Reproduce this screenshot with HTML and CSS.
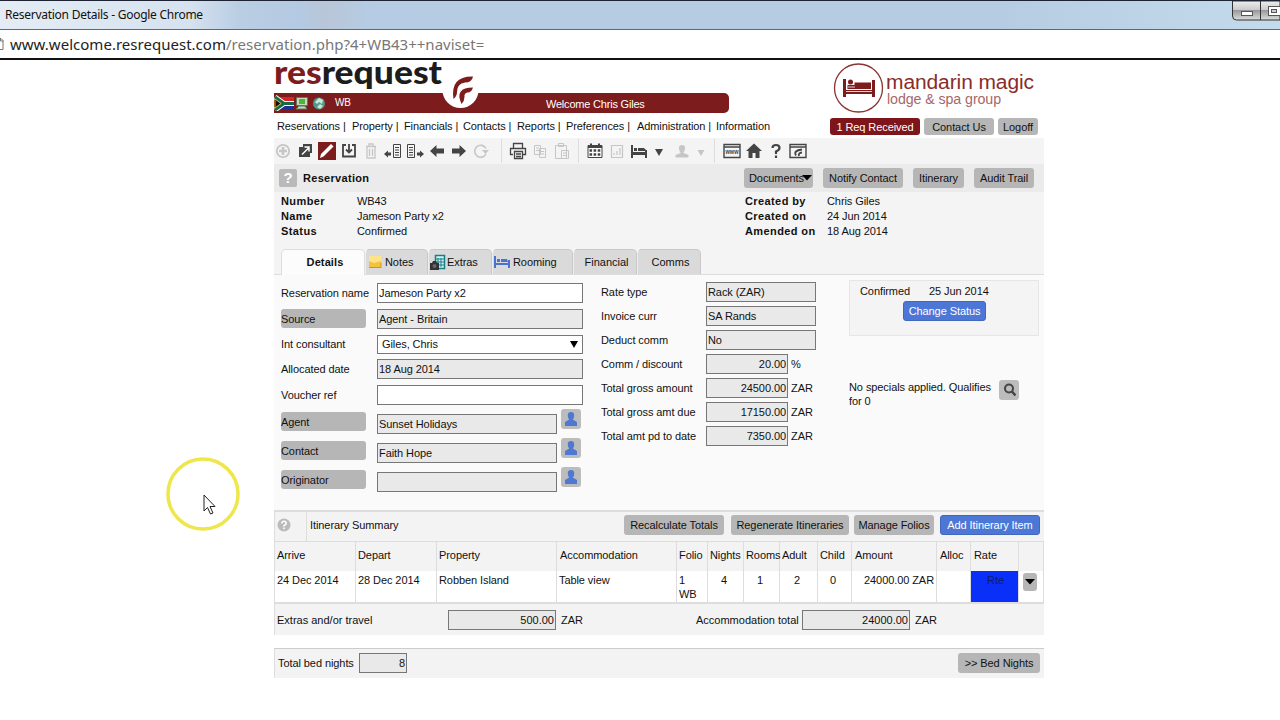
FILE: index.html
```
<!DOCTYPE html>
<html lang="en">
<head>
    <meta charset="UTF-8">
    <title>Reservation Details</title>
    <link rel="stylesheet" href="styles.css">
</head>
<body>
    <div class="titlebar">
        <span>Reservation Details - Google Chrome</span>
        <svg class="window-buttons" width="48" height="20" viewBox="0 0 48 20">
            <defs><linearGradient id="glass" x2="0" y2="1"><stop offset="0" stop-color="#eee"/><stop offset=".45" stop-color="#ccc"/><stop offset=".5" stop-color="#999"/><stop offset="1" stop-color="#ddd"/></linearGradient></defs>
            <path d="M.5 0V15q0 4 4 4H48V0z" fill="url(#glass)" stroke="#333"/>
            <path d="M28.500 0V19" stroke="#333"/>
            <rect x="9.500" y="10.500" width="11" height="4" fill="#fff" stroke="#555"/>
            <rect x="36.500" y="5.500" width="13" height="9" fill="#fff" stroke="#555"/><rect x="39.500" y="8.500" width="5" height="3" fill="#ccc" stroke="#555"/>
        </svg>
    </div>
    <div class="addressbar">
        <svg width="5" height="14" viewBox="0 0 5 14"><path d="M0 1.500h1l2 2v9H0M.5 1v3h3" fill="none" stroke="#777"/></svg>
        <span>www.welcome.resrequest.com<em>/reservation.php?4+WB43++naviset=</em></span>
    </div>

    <div class="page">
        <div class="header">
            <div class="brand">
                <svg class="logo" width="180" height="33" viewBox="0 0 180 33">
                    <text x="0" y="24" textLength="168" lengthAdjust="spacingAndGlyphs"><tspan fill="#7d1c1c">res</tspan><tspan fill="#1c1c1c">request</tspan></text>
                </svg>
                <div class="welcome-bar">
                    <svg width="52" height="16" viewBox="0 0 52 16">
                        <path fill="#d8232a" d="M1 2h19v6H1z"/><path fill="#1c2f9c" d="M1 9h19v6H1z"/>
                        <path d="M1 2l9 6.500h10M1 15l9-6.500" stroke="#fff" stroke-width="5" fill="none"/>
                        <path d="M1 2l9 6.500h10M1 15l9-6.500" stroke="#176b42" stroke-width="3" fill="none"/>
                        <path d="M1 4l6 4.500-6 4.500z" fill="#111" stroke="#e0a82e"/>
                        <path d="M22.500 2.500h11v8h-11zM25 11h6l2 3H22z" fill="#c9d6c0" stroke="#5f775f"/><path fill="#40ba38" d="M25 4h6v5h-6z"/>
                        <circle cx="45" cy="8.500" r="6" fill="#54988a"/><path d="M41 7l4-4 4 2-1 4-3-2-2 2zM43 12l3-3 3 2-3 3z" fill="#c5e8d7"/>
                    </svg>
                    <span class="property-code">WB</span>
                    <span class="welcome">Welcome Chris Giles</span>
                </div>
                <svg class="swirl" width="38" height="38" viewBox="0 0 38 38">
                    <circle cx="18.500" cy="16" r="18" fill="#fff"/>
                    <path d="M11.500 25Q8 2 31 2.500Q30 8.500 23 8.500Q15 9.500 15 18Q15 22 11.500 25z" fill="#7d1c1c"/>
                    <path d="M19.500 30Q12 13.500 31 13.500Q29.500 18.500 25.500 18.500Q22 19 22.500 23Q22.500 27 19.500 30z" fill="#7d1c1c"/>
                </svg>
            </div>
            <div class="client">
                <svg class="client-logo" width="210" height="52" viewBox="0 0 210 52">
                    <circle cx="28.500" cy="26" r="24" fill="#fff" stroke="#8a3330" stroke-width="1.300"/>
                    <path d="M13 17h3v11h26V18h3v17h-3v-3H16v3h-3z" fill="#7d1c1c"/>
                    <path d="M17.500 27v-4h7v-2.500h16.500V27z" fill="#7d1c1c"/><circle cx="20.500" cy="20" r="2.500" fill="#7d1c1c"/><path d="M18 25h7M16 29.500h26" stroke="#fff" stroke-width=".8"/>
                    <text class="client-name" x="56" y="27" textLength="148" lengthAdjust="spacingAndGlyphs">mandarin magic</text>
                    <text class="client-sub" x="57" y="42" textLength="114" lengthAdjust="spacingAndGlyphs">lodge &amp; spa group</text>
                </svg>
                <div class="client-buttons">
                    <a class="btn red">1 Req Received</a><a class="btn contact">Contact Us</a><a class="btn logoff">Logoff</a>
                </div>
            </div>
        </div>
        <div class="menu">
            <span>Reservations |</span><span>Property |</span><span>Financials |</span><span>Contacts |</span><span>Reports |</span><span>Preferences |</span><span>Administration |</span><span>Information</span>
        </div>

        <div class="toolbar">
            <svg class="off" viewBox="0 0 18 18"><circle cx="9" cy="9" r="6.200" fill="none" stroke="currentColor" stroke-width="1.800"/><path d="M9 5v8M5 9h8" stroke="currentColor" stroke-width="2.600"/></svg>
            <svg viewBox="0 0 18 18"><path d="M7 2h9v9h-2v4H3V5h4z" fill="currentColor"/><path d="M6 12.500l6.500-6.500M8.500 5h4.500v4.500" stroke="#fff" stroke-width="1.500" fill="none"/></svg>
            <svg class="active" viewBox="0 0 18 18"><path fill="#7d1c1c" d="M0 0h18v18H0z"/><path d="M2 16l1-4L13 2l2.500 2.500L5.500 14.500z" fill="#fff"/></svg>
            <svg viewBox="0 0 18 18"><path d="M6 3H3v11.500h12V3h-3" fill="none" stroke="currentColor" stroke-width="1.800"/><path d="M9 2v8M6 7.500l3 3 3-3" fill="none" stroke="currentColor" stroke-width="1.800"/></svg>
            <svg class="off" viewBox="0 0 18 18"><path d="M4 4.500h10M7 4V2h4v2M5 5v11h8V5M7.500 7v7M10.500 7v7" fill="none" stroke="currentColor" stroke-width="1.300"/></svg>
            <svg viewBox="0 0 18 18"><path d="M9.500 2.500h7v13h-7zM11 5.500h4M11 8h4M11 10.500h4M11 13h4" fill="none" stroke="currentColor"/><path d="M0 12l4-3.500v2h3v3H4v2z" fill="currentColor"/></svg>
            <svg viewBox="0 0 18 18"><path d="M1.500 2.500h7v13h-7zM3 5.500h4M3 8h4M3 10.500h4M3 13h4" fill="none" stroke="currentColor"/><path d="M18 12l-4-3.500v2h-3v3h3v2z" fill="currentColor"/></svg>
            <svg viewBox="0 0 18 18"><path d="M2 9l6.500-6V6.500H16v5H8.500V15z" fill="currentColor"/></svg>
            <svg viewBox="0 0 18 18"><path d="M16 9L9.500 3V6.500H2v5h7.500V15z" fill="currentColor"/></svg>
            <svg class="off" viewBox="0 0 18 18"><path d="M14 6.500A6 6 0 1 0 14 12" fill="none" stroke="currentColor" stroke-width="1.600"/><path d="M10 8h7l-3.500 4z" fill="currentColor"/></svg>
            <i class="sep first"></i>
            <svg viewBox="0 0 18 18"><path d="M4.500 6V1.500h9V6M4 12.500H1.500v-6h15v6H14M5.500 9.500h8v7h-8zM7 12h5M7 14.500h5" fill="none" stroke="currentColor" stroke-width="1.300"/></svg>
            <svg class="off" viewBox="0 0 18 18"><path d="M3.500 3.500h6v9h-6zM8.500 6.500h6v9h-6zM5 6h3M5 8.500h3M10 9.500h3M10 12h3" fill="#f4f4f4" stroke="currentColor"/></svg>
            <svg class="off" viewBox="0 0 18 18"><path d="M2.500 3.500h11v13h-11zM5.500 1.500h5v3h-5zM8.500 8.500h7v8h-7zM10 11h4M10 13.500h4" fill="#f4f4f4" stroke="currentColor"/></svg>
            <i class="sep"></i>
            <svg viewBox="0 0 18 18"><path d="M2 3.500h14v12H2z" fill="#fff" stroke="currentColor"/><path d="M2 5h14M5 1.500V5M13 1.500V5" stroke="currentColor" stroke-width="2"/><path d="M3.500 8.500h11M3.500 12.500h11" stroke="currentColor" stroke-width="2.500" stroke-dasharray="2.600 1.500"/></svg>
            <svg class="off" viewBox="0 0 18 18"><path d="M3.500 3.500h11v12h-11zM6 13v-2M9 13V9M12 13V6" fill="none" stroke="currentColor" stroke-width="1.200"/></svg>
            <svg viewBox="0 0 18 18"><path d="M1 3h2v7h12V8h2v8h-2v-3H3v3H1z" fill="currentColor"/><path d="M4 9V6h3v3zM8 9V6h6l2 2v1z" fill="currentColor"/></svg>
            <svg class="caret" viewBox="0 0 10 18"><path d="M1 7h8l-4 7z" fill="currentColor"/></svg>
            <svg class="off person" viewBox="0 0 18 18"><path d="M9 3q3.500 0 3 3.500Q12 9 10.500 10v1l5 2v2.500h-13V13l5-2v-1Q6 9 6 6.500 5.500 3 9 3z" fill="currentColor"/></svg>
            <svg class="caret off small" viewBox="0 0 10 18"><path d="M1.500 8h7L5 14z" fill="currentColor"/></svg>
            <i class="sep last"></i>
            <svg viewBox="0 0 18 18"><path d="M1 2.500h16v13H1zM1 5h16" fill="none" stroke="currentColor" stroke-width="1.400"/><text class="www" x="2.500" y="12" textLength="13" lengthAdjust="spacingAndGlyphs">www</text></svg>
            <svg viewBox="0 0 18 18"><path d="M9 1.500l8 7.500h-2.500v7h-4v-5h-3v5h-4V9H1z" fill="currentColor"/></svg>
            <svg viewBox="0 0 18 18"><path d="M5.500 6Q5.500 3 9 3t3.500 3Q12.500 8 9 9.500V12M9 13.500V16" fill="none" stroke="currentColor" stroke-width="2.200"/></svg>
            <svg viewBox="0 0 18 18"><path d="M1 2.500h16v13H1zM1 5h16" fill="none" stroke="currentColor" stroke-width="1.400"/><path d="M7 13.500q-3-5 6-6M10 14q-1-3 3-3.500" fill="none" stroke="currentColor" stroke-width="1.800"/></svg>
        </div>

        <div class="heading">
            <span class="help">?</span>
            <h1>Reservation</h1>
            <a class="btn documents">Documents<svg width="10" height="6" viewBox="0 0 10 6"><path d="M0 0h10L5 5.500z"/></svg></a><a class="btn notify">Notify Contact</a><a class="btn itin">Itinerary</a><a class="btn audit">Audit Trail</a>
        </div>

        <div class="info">
            <b>Number</b><span>WB43</span><b>Created by</b><span>Chris Giles</span>
            <b>Name</b><span>Jameson Party x2</span><b>Created on</b><span>24 Jun 2014</span>
            <b>Status</b><span>Confirmed</span><b>Amended on</b><span>18 Aug 2014</span>
        </div>

        <div class="tabs">
            <div class="tab current">Details</div>
            <div class="tab notes"><svg width="14" height="14" viewBox="0 0 14 14"><path d="M1 1h12v12H1z" fill="#f5c33b"/><path d="M1 1h12v5L6 8 1 6z" fill="#ffe28a"/><path d="M1 12.500h12V8" stroke="#d39413" fill="none"/></svg>Notes</div>
            <div class="tab extras"><svg width="16" height="16" viewBox="0 0 16 16"><path d="M5.500 1.500h9v13h-9z" fill="#d9f0f0" stroke="#148088" stroke-width="1.500"/><path d="M8 4v9M11 4v9M6 5h8M6 8h8M6 11h8" stroke="#148088"/><path d="M0 9h2l1-2h3l1 2h2v7H0z" fill="#333"/><circle cx="4.500" cy="12" r="2" fill="#666"/></svg>Extras</div>
            <div class="tab rooming"><svg width="16" height="14" viewBox="0 0 16 14"><path d="M0 1h2v7h12V5h2v8h-2v-3H2v3H0z" fill="#4a72d0"/><path d="M3 7V4h3v3zM7 7V4h6l1 3z" fill="#4a72d0"/></svg>Rooming</div>
            <div class="tab financial">Financial</div>
            <div class="tab comms">Comms</div>
        </div>

        <div class="details">
            <div class="left">
                <div class="row r26"><label>Reservation name</label><div class="field white">Jameson Party x2</div></div>
                <div class="row r26"><label class="link">Source</label><div class="field">Agent - Britain</div></div>
                <div class="row r24"><label class="short">Int consultant</label><div class="field white select">Giles, Chris<svg width="8" height="7" viewBox="0 0 8 7"><path d="M0 0h8L4 7z"/></svg></div></div>
                <div class="row r26"><label>Allocated date</label><div class="field">18 Aug 2014</div></div>
                <div class="row r24"><label>Voucher ref</label><div class="field white"></div></div>
                <div class="row who"><label class="link">Agent</label><div class="field">Sunset Holidays</div><span class="icon-btn"><svg viewBox="0 0 12 14"><path d="M6 0q3.500 0 3.200 4Q9 6.500 7.800 7.500L12 10v4H0v-4l4.200-2.500Q3 6.500 2.800 4 2.500 0 6 0z"/></svg></span></div>
                <div class="row who"><label class="link">Contact</label><div class="field">Faith Hope</div><span class="icon-btn"><svg viewBox="0 0 12 14"><path d="M6 0q3.500 0 3.200 4Q9 6.500 7.800 7.500L12 10v4H0v-4l4.200-2.500Q3 6.500 2.800 4 2.500 0 6 0z"/></svg></span></div>
                <div class="row who"><label class="link">Originator</label><div class="field"></div><span class="icon-btn"><svg viewBox="0 0 12 14"><path d="M6 0q3.500 0 3.200 4Q9 6.500 7.800 7.500L12 10v4H0v-4l4.200-2.500Q3 6.500 2.800 4 2.500 0 6 0z"/></svg></span></div>
            </div>
            <div class="middle">
                <div class="row"><label>Rate type</label><div class="field">Rack (ZAR)</div></div>
                <div class="row"><label>Invoice curr</label><div class="field">SA Rands</div></div>
                <div class="row"><label>Deduct comm</label><div class="field">No</div></div>
                <div class="row"><label>Comm / discount</label><div class="field num">20.00</div>%</div>
                <div class="row"><label>Total gross amount</label><div class="field num">24500.00</div>ZAR</div>
                <div class="row"><label>Total gross amt due</label><div class="field num">17150.00</div>ZAR</div>
                <div class="row"><label>Total amt pd to date</label><div class="field num">7350.00</div>ZAR</div>
            </div>
            <div class="right">
                <div class="status-box">
                    <div class="status-line"><span>Confirmed</span><span>25 Jun 2014</span></div>
                    <a class="btn blue change">Change Status</a>
                </div>
                <div class="specials">
                    <p>No specials applied. Qualifies for 0</p>
                    <span class="icon-btn"><svg class="lens" viewBox="0 0 14 14"><circle cx="7" cy="5.500" r="4" fill="none" stroke="#444" stroke-width="2"/><path d="M10 8.500l3.500 4" stroke="#444" stroke-width="2.500"/></svg></span>
                </div>
            </div>
        </div>

        <div class="summary-head">
            <span class="round-help"><svg width="14" height="14" viewBox="0 0 14 14"><circle cx="7" cy="7" r="6.500" fill="#bbb"/><path d="M4.800 5.500Q5 3.300 7 3.300T9.200 5.200Q9.200 6.500 7 7.500V8.500M7 9.500v1.700" fill="none" stroke="#fff" stroke-width="1.600"/></svg></span>
            <span class="summary-title">Itinerary Summary</span>
            <a class="btn recalc">Recalculate Totals</a><a class="btn regen">Regenerate Itineraries</a><a class="btn folios">Manage Folios</a><a class="btn blue additem">Add Itinerary Item</a>
        </div>
        <table class="itinerary">
            <colgroup><col class="w81"><col class="w81"><col class="w120"><col class="w120"><col class="w31"><col class="w36"><col class="w36"><col class="w38"><col class="w34"><col class="w85"><col class="w34"><col class="w48"><col class="w26"></colgroup>
            <tr><th>Arrive</th><th>Depart</th><th>Property</th><th>Accommodation</th><th>Folio</th><th>Nights</th><th>Rooms</th><th>Adult</th><th>Child</th><th>Amount</th><th>Alloc</th><th>Rate</th><th></th></tr>
            <tr><td>24 Dec 2014</td><td>28 Dec 2014</td><td>Robben Island</td><td>Table view</td><td>1<br>WB</td><td class="mid">4</td><td class="mid">1</td><td class="mid">2</td><td class="mid">0</td><td class="amount">24000.00 ZAR</td><td></td><td class="rate">Rte</td><td><span class="drop"><svg width="10" height="6" viewBox="0 0 10 6"><path d="M0 0h10L5 5.500z"/></svg></span></td></tr>
        </table>
        <div class="totals">
            <span class="extras-label">Extras and/or travel</span><div class="field num">500.00</div><span class="acc-label">ZAR</span><span class="acc-total">Accommodation total</span><div class="field num">24000.00</div><span>ZAR</span>
        </div>
        <div class="bednights">
            <span>Total bed nights</span><div class="field num">8</div><a class="btn nights">&gt;&gt; Bed Nights</a>
        </div>
    </div>

    <svg class="pointer" width="76" height="76" viewBox="0 0 76 76">
        <circle cx="38" cy="38" r="35" fill="#fff" stroke="#efe64a" stroke-width="3.500"/>
        <path d="M39 39v16l3.500-3.500 3 6.500 2.500-1-3-6.500h5z" fill="#fff" stroke="#222"/>
    </svg>
</body>
</html>
```
FILE: styles.css
```
* {
    box-sizing: border-box;
}
body {
    margin: 0;
    height: 720px;
    overflow: hidden;
    position: relative;
    background: #fff;
    color: #111;
    font-family: "Liberation Sans", Arial, sans-serif;
    font-size: 11px;
    line-height: 14px;
    letter-spacing: -.08px;
}
svg {
    display: block;
    flex: none;
}

/* browser window */
.titlebar {
    height: 30px;
    border-top: 1px solid #1d2333;
    border-bottom: 1px solid #5c6b70;
    background: linear-gradient(90deg, #e4edf5 0, #d5e2ef 190px, #b9cde3 240px, #b4cae2 300px, #b9c6d8 325px, #b5cce4 370px, #b6cce2 1000px, #c4dbec 1280px);
    display: flex;
    justify-content: space-between;
    padding-left: 5px;
    font: 12px/27px "Noto Sans", sans-serif;
    letter-spacing: -.26px;
}
.addressbar {
    height: 30px;
    border-bottom: 2px solid #111;
    display: flex;
    align-items: center;
    gap: 5px;
    font: 15px/28px "Noto Sans", sans-serif;
    letter-spacing: .02px;
    color: #222;
}
.addressbar em {
    font-style: normal;
    color: #777;
}

/* header */
.page {
    width: 770px;
    margin-left: 274px;
}
.header {
    height: 58px;
    display: flex;
}
.brand {
    position: relative;
    width: 455px;
}
.logo {
    overflow: visible;
}
.logo text {
    font: 900 33px Lato, sans-serif;
    letter-spacing: 0;
}
.welcome-bar {
    height: 20px;
    background: #7d1c1c;
    border-radius: 0 5px 5px 0;
    display: flex;
    align-items: center;
    color: #fff;
}
.property-code {
    margin-left: 9px;
    font-size: 10px;
}
.welcome {
    margin-left: 195px;
    padding-top: 2px;
    letter-spacing: -.2px;
}
.swirl {
    position: absolute;
    left: 168px;
    top: 14px;
}
.client {
    margin-left: 101px;
}
.client-logo {
    margin-top: 2px;
}
.client-name {
    font-size: 20px;
    fill: #8a2c2c;
}
.client-sub {
    font-size: 14px;
    fill: #a56767;
}
.client-buttons {
    display: flex;
    gap: 4px;
    margin: 4px 0 0;
}
.btn {
    height: 20px;
    flex: none;
    border-radius: 3px;
    background: #b6b6b6;
    text-align: center;
    line-height: 20px;
    white-space: nowrap;
}
.client-buttons .btn {
    height: 17px;
    line-height: 18px;
}
.client-buttons .red {
    width: 90px;
    background: #7d151b;
    color: #fff;
}
.contact {
    width: 70px;
}
.logoff {
    width: 40px;
}
.menu {
    height: 20px;
    padding: 1px 0 0 3px;
    display: grid;
    grid-template-columns: 75px 52px 59px 54px 49px 71px 79px 60px;
    white-space: nowrap;
    letter-spacing: -.1px;
}

/* toolbar */
.toolbar {
    height: 26px;
    background: #f4f4f4;
    display: flex;
    align-items: center;
    color: #444;
}
.toolbar svg {
    width: 18px;
    height: 18px;
    margin: 0 2px;
}
.toolbar svg:first-child {
    margin-left: 0;
}
.toolbar .off {
    color: #c6c6c6;
}
.toolbar .caret {
    width: 10px;
    margin: 0 4px;
}
.toolbar .person {
    margin-left: 5px;
}
.toolbar .small {
    margin: 0 3px;
}
.www {
    font: bold 7px "Liberation Sans", sans-serif;
    letter-spacing: 0;
    fill: #444;
}
.sep {
    width: 1px;
    height: 24px;
    margin: 0 5px;
    background: #ddd;
}
.sep.first {
    margin-left: 9px;
}
.sep.last {
    margin-right: 6px;
}

/* title row */
.heading {
    height: 28px;
    background: #ebebeb;
    display: flex;
    align-items: center;
}
.help {
    width: 18px;
    height: 18px;
    margin-left: 5px;
    border-radius: 2px;
    background: #b9b9b9;
    color: #fff;
    font: bold 15px/18px "Liberation Sans", sans-serif;
    text-align: center;
}
h1 {
    flex: none;
    width: 441px;
    margin: 0 0 0 6px;
    font-size: 11px;
    letter-spacing: .3px;
}
.documents {
    width: 69px;
    display: flex;
    align-items: center;
    padding-left: 5px;
}
.documents svg {
    margin-left: -2px;
}
.notify {
    width: 80px;
    margin-left: 10px;
}
.itin {
    width: 51px;
    margin-left: 10px;
}
.audit {
    width: 60px;
    margin-left: 10px;
}
.info {
    height: 57px;
    padding: 2px 0 0 7px;
    background: #f4f4f4;
    display: grid;
    grid-template-columns: 76px 388px 82px 1fr;
    grid-auto-rows: 15px;
    line-height: 15px;
}
.info b {
    letter-spacing: .4px;
}

/* tabs */
.tabs {
    height: 26px;
    padding-left: 7px;
    background: #f4f4f4;
    border-bottom: 1px solid #ddd;
    display: flex;
}
.tab {
    height: 25px;
    display: flex;
    align-items: center;
    border: 1px solid #c8c8c8;
    border-left-color: #eee;
    border-bottom: none;
    border-radius: 5px 5px 0 0;
    background: #dadada;
}
.tab.current {
    width: 84px;
    height: 26px;
    justify-content: center;
    padding: 0 0 1px 4px;
    background: #fcfcfc;
    border-color: #ddd;
    font-weight: bold;
    letter-spacing: .1px;
}
.notes {
    width: 63px;
    padding-left: 2px;
    gap: 3px;
}
.extras {
    width: 64px;
    padding-left: 1px;
    gap: 1px;
}
.rooming {
    width: 81px;
    padding-left: 1px;
    gap: 3px;
}
.financial, .comms {
    width: 64px;
    justify-content: center;
    padding-left: 3px;
    letter-spacing: 0;
}

/* form */
.details {
    height: 235px;
    background: #fafafa;
    display: flex;
}
.left {
    width: 327px;
    padding: 8px 0 0 7px;
}
.row {
    display: flex;
    align-items: flex-start;
}
.r26 {
    height: 26px;
}
.r24 {
    height: 24px;
}
label {
    flex: none;
    line-height: 20px;
}
.left label {
    width: 85px;
    margin-right: 11px;
    white-space: nowrap;
}
.left label.link {
    height: 19px;
    background: #b6b6b6;
    border-radius: 3px;
}
.left label.short {
    line-height: 18px;
}
.field {
    flex: none;
    width: 206px;
    height: 20px;
    border: 1px solid #777;
    background: #e9e9e9;
    padding: 0 1px;
    line-height: 19px;
}
.field.white {
    background: #fff;
}
.field.select {
    height: 19px;
    padding: 0 4px;
    display: flex;
    justify-content: space-between;
    align-items: center;
}
.who {
    height: 29px;
}
.who label {
    margin-top: 3px;
}
.who .field {
    width: 180px;
    margin: 5px 4px 0 0;
}
.icon-btn {
    flex: none;
    width: 20px;
    height: 20px;
    border-radius: 3px;
    background: #bcbcbc;
    display: flex;
    align-items: center;
    justify-content: center;
}
.icon-btn svg {
    width: 12px;
    height: 14px;
    fill: #4f78d0;
}
.icon-btn .lens {
    width: 14px;
}
.middle {
    width: 248px;
    padding-top: 7px;
}
.middle .row {
    height: 24px;
    line-height: 20px;
}
.middle label {
    width: 105px;
}
.middle .field {
    width: 110px;
    line-height: 19px;
}
.middle .num {
    width: 82px;
    margin-right: 3px;
}
.num {
    text-align: right;
}
.right {
    width: 190px;
    padding-top: 5px;
}
.status-box {
    height: 56px;
    border: 1px solid #e6e6e6;
    background: #f4f4f4;
    padding-top: 3px;
}
.status-line {
    display: flex;
    gap: 19px;
    padding-left: 10px;
}
.btn.blue {
    background: #4d77d6;
    border: 1px solid #4168bd;
    color: #fff;
    line-height: 18px;
}
.change {
    display: block;
    width: 83px;
    margin: 3px 0 0 53px;
}
.specials {
    display: flex;
    margin-top: 44px;
}
.specials p {
    width: 150px;
    margin: 0;
}

/* itinerary */
.summary-head {
    height: 31px;
    padding-bottom: 3px;
    border-top: 2px solid #ddd;
    border-left: 1px solid #ddd;
    background: #f3f3f3;
    display: flex;
    align-items: center;
}
.round-help {
    width: 32px;
    height: 29px;
    margin-bottom: -3px;
    padding: 6px 0 0 2px;
    border-right: 1px solid #ddd;
}
.summary-title {
    width: 317px;
    padding-left: 3px;
}
.recalc {
    width: 100px;
}
.regen {
    width: 118px;
    margin-left: 7px;
}
.folios {
    width: 80px;
    margin-left: 5px;
}
.additem {
    width: 100px;
    margin-left: 6px;
}
.itinerary {
    width: 770px;
    table-layout: fixed;
    border-spacing: 0;
    border-right: 1px solid #ddd;
}
.w81 { width: 81px; }
.w120 { width: 120px; }
.w31 { width: 31px; }
.w34 { width: 34px; }
.w36 { width: 36px; }
.w38 { width: 38px; }
.w48 { width: 48px; }
.w85 { width: 85px; }
.w26 { width: 25px; }
th, td {
    border-left: 1px solid #ddd;
    padding: 0 0 0 2px;
    text-align: left;
    font-weight: normal;
    white-space: nowrap;
}
th {
    height: 30px;
    padding-bottom: 3px;
    border-top: 1px solid #ddd;
    background: #f3f3f3;
}
td {
    height: 33px;
    padding-top: 2px;
    border-bottom: 2px solid #ddd;
    vertical-align: top;
}
th:nth-child(n+10), th:nth-child(4) {
    padding-left: 3px;
}
td.mid {
    text-align: center;
    padding: 2px 3px 0 0;
}
td.amount {
    text-align: right;
    padding-right: 2px;
}
td.rate {
    background: #0a2ff8;
    text-align: center;
    color: #0d1c70;
}
.drop {
    width: 14px;
    height: 18px;
    margin-left: 2px;
    border-radius: 3px;
    background: #b6b6b6;
    display: flex;
    align-items: center;
    justify-content: center;
}
.totals {
    height: 31px;
    padding: 0 0 0 2px;
    border-left: 1px solid #ddd;
    background: #f3f3f3;
    display: flex;
    align-items: center;
    letter-spacing: 0;
}
.totals .field {
    width: 108px;
    margin-right: 5px;
}
.extras-label {
    width: 171px;
}
.acc-label {
    width: 135px;
}
.acc-total {
    width: 106px;
}
.bednights {
    height: 30px;
    margin-top: 13px;
    padding: 0 4px 1px 3px;
    border-top: 1px solid #ccc;
    border-left: 1px solid #ddd;
    background: #f3f3f3;
    display: flex;
    align-items: center;
}
.bednights > span {
    width: 81px;
}
.bednights .field {
    width: 48px;
}
.nights {
    width: 82px;
    margin-left: auto;
}

/* mouse pointer with its highlight ring */
.pointer {
    position: absolute;
    left: 165px;
    top: 456px;
}
```
